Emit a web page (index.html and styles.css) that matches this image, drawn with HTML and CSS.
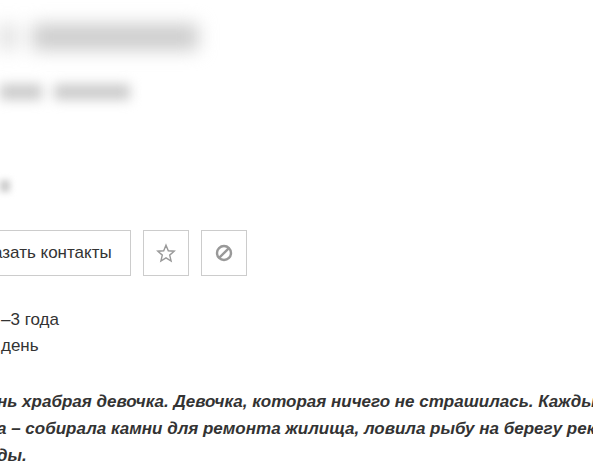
FILE: index.html
```html
<!DOCTYPE html>
<html lang="ru">
<head>
    <meta charset="utf-8">
    <title>Резюме</title>
    <link rel="stylesheet" href="styles.css">
</head>
<body>

    <main class="resume">
        <div class="private" aria-hidden="true">
            <div class="words words-name"><i class="word short"></i><i class="word long"></i></div>
            <div class="words words-info"><i class="word short"></i><i class="word long"></i></div>
            <div class="words words-pay"><i class="word short"></i></div>
        </div>

        <div class="actions">
            <button class="btn btn-contacts" type="button">азать контакты</button>
            <button class="btn btn-icon" type="button" aria-label="В избранное">
                <svg width="20" height="20" viewBox="0 0 20 20" fill="none" stroke="#999" stroke-width="1.4">
                    <path d="M10 2.2l2.3 5.6 5.9.4-4.5 3.9 1.4 5.9-5.1-3.2-5.1 3.2 1.4-5.9L1.8 8.2l5.9-.4z"/>
                </svg>
            </button>
            <button class="btn btn-icon" type="button" aria-label="Скрыть">
                <svg width="20" height="20" viewBox="0 0 20 20" fill="none" stroke="#999" stroke-width="2.4">
                    <circle cx="10" cy="10" r="7"/>
                    <path d="M4.8 15.2l10.4-10.4"/>
                </svg>
            </button>
        </div>

        <div class="facts">
            <div>–3 года</div>
            <div>день</div>
        </div>

        <p class="about">нь храбрая девочка. Девочка, которая ничего не страшилась. Каждый<br>а – собирала камни для ремонта жилища, ловила рыбу на берегу реки,<br>ды.</p>
    </main>

</body>
</html>
```

FILE: styles.css
```css
body {
    margin: 0;
    background: #fff;
    color: #333;
    font-family: "Liberation Sans", Arial, sans-serif;
    font-size: 17px;
    line-height: 26px;
}
.resume {
    overflow: hidden;
}
.private {
    height: 230px;
    overflow: hidden;
}
.words {
    display: flex;
    filter: blur(9px);
}
.word {
    background: #ccc;
}
.words-name {
    gap: 16px;
    height: 26px;
    padding-top: 24px;
}
.words-name .short {
    width: 16px;
    background: #ddd;
}
.words-name .long {
    width: 166px;
}
.words-info {
    gap: 12px;
    height: 16px;
    padding-top: 34px;
    filter: blur(6px);
}
.words-info .short {
    width: 42px;
}
.words-info .long {
    width: 76px;
}
.words-pay {
    height: 12px;
    padding-top: 80px;
    filter: blur(3px);
}
.words-pay .short {
    width: 10px;
}
.actions {
    display: flex;
    gap: 12px;
    margin-left: -26px;
}
.btn {
    box-sizing: border-box;
    height: 46px;
    padding: 0 18px;
    border: 1px solid #ccc;
    background: #fff;
    color: #333;
    font: inherit;
    white-space: nowrap;
    cursor: pointer;
}
.btn-icon {
    display: flex;
    align-items: center;
    justify-content: center;
    width: 46px;
    padding: 0;
}
.btn:hover {
    border-color: #999;
}
.facts {
    margin-top: 31px;
    padding-left: 1px;
}
.about {
    margin: 29px 0 0 -3px;
    line-height: 27px;
    font-weight: bold;
    font-style: italic;
    white-space: nowrap;
}
```
